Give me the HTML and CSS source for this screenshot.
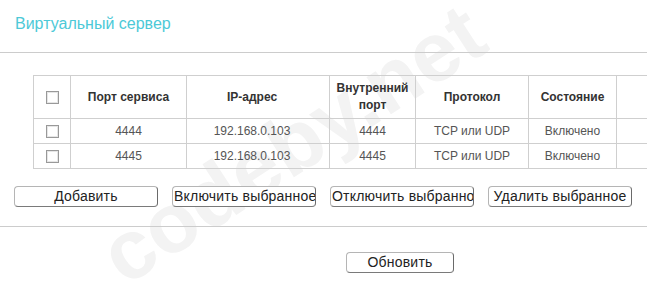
FILE: index.html
```html
<!DOCTYPE html>
<html lang="ru">
<head>
<meta charset="utf-8">
<title>Виртуальный сервер</title>
<link rel="stylesheet" href="styles.css">
</head>
<body>
<div class="watermark">codeby.net</div>
<div class="page">
  <h1 class="title">Виртуальный сервер</h1>
  <div class="rule"></div>
  <table class="grid">
    <colgroup>
      <col class="c-check">
      <col class="c-port">
      <col class="c-ip">
      <col class="c-inner">
      <col class="c-proto">
      <col class="c-state">
      <col class="c-edit">
    </colgroup>
    <thead>
      <tr>
        <th><span class="box"></span></th>
        <th>Порт сервиса</th>
        <th class="ip">IP-адрес</th>
        <th>Внутренний<br>порт</th>
        <th>Протокол</th>
        <th>Состояние</th>
        <th></th>
      </tr>
    </thead>
    <tbody>
      <tr>
        <td><span class="box"></span></td>
        <td>4444</td>
        <td class="ip">192.168.0.103</td>
        <td>4444</td>
        <td>TCP или UDP</td>
        <td>Включено</td>
        <td></td>
      </tr>
      <tr>
        <td><span class="box"></span></td>
        <td>4445</td>
        <td class="ip">192.168.0.103</td>
        <td>4445</td>
        <td>TCP или UDP</td>
        <td>Включено</td>
        <td></td>
      </tr>
    </tbody>
  </table>
  <div class="actions">
    <div class="btn">Добавить</div>
    <div class="btn">Включить выбранное</div>
    <div class="btn">Отключить выбранное</div>
    <div class="btn">Удалить выбранное</div>
  </div>
  <div class="rule"></div>
  <div class="footer">
    <div class="btn btn-refresh">Обновить</div>
  </div>
</div>
</body>
</html>
```

FILE: styles.css
```css
html {
  background: #fff;
}
body {
  margin: 0;
  overflow: hidden;
  font-family: "Liberation Sans", Arial, sans-serif;
  color: #333;
}
.page {
  width: 647px;
}
.watermark {
  position: absolute;
  left: 132px;
  top: 214px;
  font-family: "Liberation Sans", Arial, sans-serif;
  font-weight: bold;
  font-size: 84px;
  line-height: 1;
  color: #f3f3f3;
  transform: rotate(-33deg);
  transform-origin: 0 100%;
  white-space: nowrap;
  z-index: -1;
}
.title {
  margin: 0;
  padding: 14px 0 0 15px;
  height: 52px;
  box-sizing: border-box;
  font-size: 16px;
  font-weight: normal;
  line-height: 20px;
  color: #4cc9d7;
}
.rule {
  height: 1px;
  background: #cccccc;
}
.grid {
  margin: 22px 0 0 33px;
  border-collapse: collapse;
  table-layout: fixed;
  width: 680px;
  font-size: 12px;
}
.c-check { width: 37px; }
.c-port { width: 116px; }
.c-ip { width: 143px; }
.c-inner { width: 86px; }
.c-proto { width: 113px; }
.c-state { width: 88px; }
.c-edit { width: 97px; }
.grid th,
.grid td {
  border: 1px solid #cfcfcf;
  text-align: center;
  padding: 0;
}
.grid .ip {
  padding-right: 12px;
}
.grid th {
  height: 42px;
  font-weight: bold;
  color: #333;
  line-height: 17px;
  font-size: 12px;
}
.grid td {
  height: 24px;
  color: #555;
}
.box {
  display: inline-block;
  width: 11px;
  height: 11px;
  border: 1px solid #999;
  box-shadow: inset 0 0 0 1px #e6e6e6;
  vertical-align: middle;
  background: #fff;
}
.actions {
  display: flex;
  gap: 14px;
  padding: 17px 0 0 14px;
  height: 57px;
  box-sizing: border-box;
}
.btn {
  width: 144px;
  height: 21px;
  box-sizing: border-box;
  padding: 0 1px;
  border: 1px solid #b5b5b5;
  border-right-color: #6a6a6a;
  border-bottom-color: #7a7a7a;
  border-radius: 4px;
  background: #fff;
  font-size: 14px;
  letter-spacing: 0.2px;
  line-height: 19px;
  text-align: center;
  white-space: nowrap;
  overflow: hidden;
  color: #222;
}
.footer {
  padding: 25px 0 0 346px;
}
.btn-refresh {
  width: 108px;
}
```
